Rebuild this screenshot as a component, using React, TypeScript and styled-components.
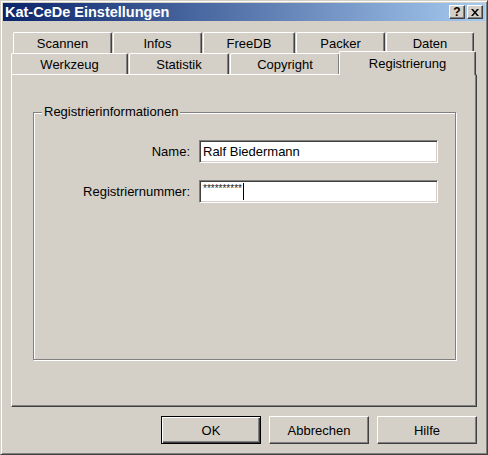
import styled, { createGlobalStyle } from 'styled-components';

const GlobalStyle = createGlobalStyle`
  html, body {
    margin: 0;
    padding: 0;
    background: #d4d0c8;
  }
  body {
    font-family: "Liberation Sans", Arial, sans-serif;
    font-size: 13px;
    color: #000;
  }
  * { box-sizing: border-box; }
`;

const Window = styled.div`
  width: 488px;
  height: 455px;
  display: flex;
  flex-direction: column;
  background: #d4d0c8;
  border: 1px solid;
  border-color: #d4d0c8 #404040 #404040 #d4d0c8;
  box-shadow: inset 1px 1px 0 #fff, inset -1px -1px 0 #808080;
  padding: 2px;
`;

const TitleBar = styled.div`
  height: 18px;
  margin-bottom: 1px;
  display: flex;
  align-items: center;
  justify-content: space-between;
  padding: 0 2px;
  background: linear-gradient(to right, #0a246a, #a6caf0);
`;

const Title = styled.span`
  color: #fff;
  font-weight: bold;
  font-size: 14.5px;
  line-height: 18px;
`;

const CaptionButtons = styled.div`
  display: flex;
  gap: 2px;
`;

const CaptionButton = styled.div`
  width: 16px;
  height: 14px;
  display: flex;
  align-items: center;
  justify-content: center;
  background: #d4d0c8;
  border: 1px solid;
  border-color: #fff #404040 #404040 #fff;
  box-shadow: inset -1px -1px 0 #808080;
  font-weight: bold;
  font-size: 12px;
  line-height: 12px;
`;

const Body = styled.div`
  flex: 1;
  display: flex;
  flex-direction: column;
  padding: 10px 8px 8px 8px;
`;

const TabStrip = styled.div`
  display: flex;
  flex-direction: column;
  height: 42px;
`;

const TabRow = styled.div<{ $indent: number }>`
  display: flex;
  height: 21px;
  gap: 1px;
  padding-left: ${(p) => p.$indent}px;
`;

const Tab = styled.div<{ $w: number; $active?: boolean }>`
  position: relative;
  width: ${(p) => p.$w}px;
  height: ${(p) => (p.$active ? 24 : 21)}px;
  margin: ${(p) => (p.$active ? '-2px -2px -1px -2px' : '0')};
  z-index: ${(p) => (p.$active ? 2 : 0)};
  display: flex;
  align-items: center;
  justify-content: center;
  padding-top: ${(p) => (p.$active ? 0 : 1)}px;
  background: #d4d0c8;
  border-top: 1px solid #fff;
  border-left: 1px solid #fff;
  border-right: 1px solid #404040;
  border-radius: 2px 2px 0 0;
  box-shadow: inset -1px 0 0 #808080;
  white-space: nowrap;
`;

const Panel = styled.div`
  flex: 1;
  display: flex;
  flex-direction: column;
  padding: 37px 20px 46px 21px;
  border-top: 1px solid #fff;
  border-left: 1px solid #fff;
  border-right: 1px solid #404040;
  border-bottom: 1px solid #404040;
  box-shadow: inset -1px -1px 0 #808080;
`;

const GroupBox = styled.div`
  position: relative;
  flex: 1;
  border: 1px solid #808080;
  box-shadow: 1px 1px 0 #fff, inset 1px 1px 0 #fff;
`;

const Legend = styled.span`
  position: absolute;
  top: -9px;
  left: 8px;
  padding: 0 2px;
  line-height: 16px;
  background: #d4d0c8;
`;

const Form = styled.div`
  display: grid;
  grid-template-columns: 156px 239px;
  column-gap: 9px;
  row-gap: 17px;
  padding-top: 27px;
`;

const Label = styled.label`
  text-align: right;
  align-self: center;
`;

const Field = styled.div`
  height: 23px;
  display: flex;
  align-items: center;
  padding-left: 3px;
  background: #fff;
  border: 1px solid;
  border-color: #808080 #fff #fff #808080;
  box-shadow: inset 1px 1px 0 #404040, inset -1px -1px 0 #d4d0c8;
  white-space: nowrap;
`;

const Stars = styled.span`
  font-size: 10px;
  line-height: 10px;
  align-self: flex-start;
  margin-top: 3px;
  color: #222;
`;

const Caret = styled.span`
  width: 1px;
  height: 17px;
  background: #000;
  margin-left: 1px;
`;

const ButtonRow = styled.div`
  display: flex;
  justify-content: flex-end;
  gap: 8px;
  margin-top: 9px;
`;

const Button = styled.button<{ $default?: boolean }>`
  width: 100px;
  height: 28px;
  padding: 0;
  font-family: "Liberation Sans", Arial, sans-serif;
  font-size: 13px;
  color: #000;
  background: #d4d0c8;
  border: 1px solid;
  border-color: ${(p) => (p.$default ? '#000' : '#fff #404040 #404040 #fff')};
  box-shadow: ${(p) =>
    p.$default
      ? 'inset 1px 1px 0 #fff, inset -1px -1px 0 #404040, inset -2px -2px 0 #808080'
      : 'inset -1px -1px 0 #808080'};
`;

const backTabs = [
  { label: 'Scannen', w: 99 },
  { label: 'Infos', w: 89 },
  { label: 'FreeDB', w: 92 },
  { label: 'Packer', w: 89 },
  { label: 'Daten', w: 88 },
];

const frontTabs = [
  { label: 'Werkzeug', w: 117 },
  { label: 'Statistik', w: 100 },
  { label: 'Copyright', w: 110 },
  { label: 'Registrierung', w: 137, active: true },
];

export default function App() {
  return (
    <>
      <GlobalStyle />
      <Window>
        <TitleBar>
          <Title>Kat-CeDe Einstellungen</Title>
          <CaptionButtons>
            <CaptionButton>?</CaptionButton>
            <CaptionButton>
              <svg width="8" height="7" viewBox="0 0 8 7">
                <path d="M0 0h2l2 2.5L6 0h2L5 3.5 8 7H6L4 4.5 2 7H0l3-3.5z" fill="#000" />
              </svg>
            </CaptionButton>
          </CaptionButtons>
        </TitleBar>
        <Body>
          <TabStrip>
            <TabRow $indent={2}>
              {backTabs.map((t) => (
                <Tab key={t.label} $w={t.w}>{t.label}</Tab>
              ))}
            </TabRow>
            <TabRow $indent={0}>
              {frontTabs.map((t) => (
                <Tab key={t.label} $w={t.w} $active={t.active}>{t.label}</Tab>
              ))}
            </TabRow>
          </TabStrip>
          <Panel>
            <GroupBox>
              <Legend>Registrierinformationen</Legend>
              <Form>
                <Label>Name:</Label>
                <Field>Ralf Biedermann</Field>
                <Label>Registriernummer:</Label>
                <Field>
                  <Stars>**********</Stars>
                  <Caret />
                </Field>
              </Form>
            </GroupBox>
          </Panel>
          <ButtonRow>
            <Button $default>OK</Button>
            <Button>Abbrechen</Button>
            <Button>Hilfe</Button>
          </ButtonRow>
        </Body>
      </Window>
    </>
  );
}
